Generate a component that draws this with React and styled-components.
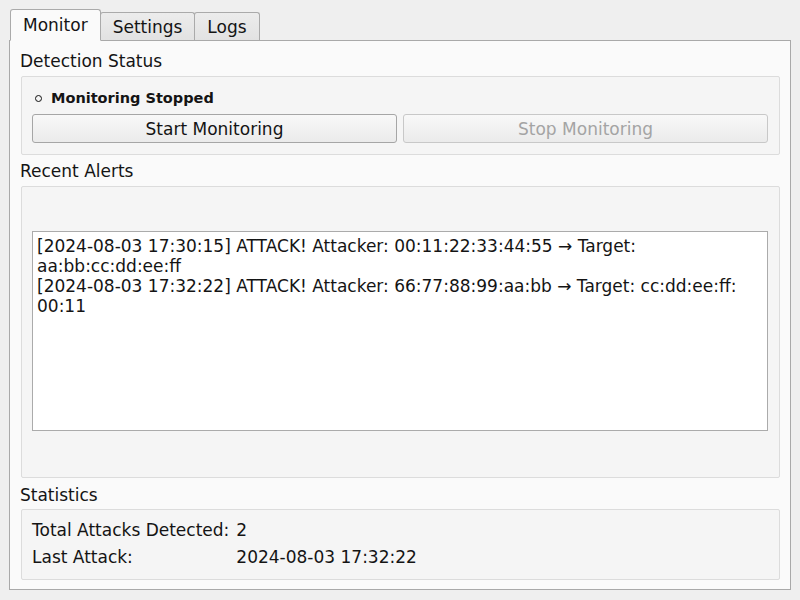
import React, { useState } from 'react';
import styled, { createGlobalStyle } from 'styled-components';

const GlobalStyle = createGlobalStyle`
	html, body {
		margin: 0;
		padding: 0;
		background: #efefef;
	}
	body {
		font-family: 'DejaVu Sans', 'Liberation Sans', sans-serif;
		font-size: 17px;
		line-height: 20px;
		color: #141414;
	}
`;

const Window = styled.div`
	width: 800px;
	height: 600px;
	box-sizing: border-box;
	padding: 9px 9px 10px 9px;
	display: flex;
	flex-direction: column;
`;

const TabBar = styled.div`
	display: flex;
	align-items: flex-end;
	padding-left: 1px;
	height: 32px;
	position: relative;
	z-index: 1;
	margin-bottom: -1px;
`;

const Tab = styled.div`
	box-sizing: border-box;
	padding: 0 12px;
	display: flex;
	align-items: center;
	border: 1px solid #aaaaaa;
	border-radius: 3px 3px 0 0;
	height: ${(p) => (p.active ? '32px' : '28px')};
	margin-bottom: ${(p) => (p.active ? '0' : '1px')};
	background: ${(p) => (p.active ? '#fafafa' : 'linear-gradient(#ececec, #e2e2e2)')};
	border-bottom: ${(p) => (p.active ? '1px solid #fafafa' : 'none')};
	margin-left: ${(p) => (p.active ? '0' : '-1px')};
	padding-top: ${(p) => (p.active ? '0' : '1px')};
	cursor: default;
	&:first-child {
		margin-left: 0;
	}
`;

const Pane = styled.div`
	flex: 1;
	box-sizing: border-box;
	border: 1px solid #a9a9a9;
	background: #fafafa;
	padding: 10px 10px 9px 11px;
	display: flex;
	flex-direction: column;
`;

const GroupTitle = styled.div`
	height: 20px;
	margin-left: -1px;
	margin-bottom: ${(p) => p.gap || 5}px;
`;

const Frame = styled.div`
	box-sizing: border-box;
	border: 1px solid #dcdcdc;
	border-radius: 2px;
	background: #f5f5f5;
	margin-bottom: ${(p) => p.below || 0}px;
`;

const StatusFrame = styled(Frame)`
	padding: 11px 11px 11px 10px;
	display: flex;
	flex-direction: column;
	gap: 6px;
`;

const StatusRow = styled.div`
	display: flex;
	align-items: center;
	height: 20px;
	padding-left: 3px;
	gap: 9px;
	font-weight: bold;
	font-size: 14.5px;
`;

const Ring = styled.span`
	display: inline-block;
	width: 7px;
	height: 7px;
	box-sizing: border-box;
	border: 1.5px solid #111;
	border-radius: 50%;
`;

const ButtonRow = styled.div`
	display: grid;
	grid-template-columns: 1fr 1fr;
	gap: 6px;
`;

const Button = styled.button`
	height: 29px;
	box-sizing: border-box;
	font: inherit;
	border: 1px solid ${(p) => (p.disabled ? '#c8c8c8' : '#a6a6a6')};
	border-radius: 3px;
	background: linear-gradient(#f8f8f8, #ebebeb);
	color: ${(p) => (p.disabled ? '#a4a4a4' : '#141414')};
	padding: 0;
`;

const AlertFrame = styled(Frame)`
	flex: 1;
	display: flex;
	align-items: center;
	padding: 0 11px 2px 10px;
`;

const AlertLog = styled.div`
	flex: 1;
	height: 200px;
	box-sizing: border-box;
	border: 1px solid #ababab;
	background: #ffffff;
	padding: 4px 6px 4px 4px;
	overflow: hidden;
`;

const AlertLine = styled.div`
	line-height: 20px;
`;

const StatsFrame = styled(Frame)`
	padding: 10px 11px 12px 10px;
	display: grid;
	grid-template-columns: max-content 1fr;
	column-gap: 7px;
	row-gap: 7px;
`;

const alerts = [
	['[2024-08-03 17:30:15] ATTACK! Attacker: 00:11:22:33:44:55 → Target: aa:bb:cc:dd:ee:ff'],
	['[2024-08-03 17:32:22] ATTACK! Attacker: 66:77:88:99:aa:bb → Target: cc:dd:ee:ff:', '00:11']
];

export default function App() {
	const [tab, setTab] = useState('Monitor');

	return (
		<Window>
			<GlobalStyle />
			<TabBar>
				{['Monitor', 'Settings', 'Logs'].map((name) => (
					<Tab key={name} active={tab === name} onClick={() => setTab(name)}>
						{name}
					</Tab>
				))}
			</TabBar>
			<Pane>
				<GroupTitle>Detection Status</GroupTitle>
				<StatusFrame below={6}>
					<StatusRow>
						<Ring />
						Monitoring Stopped
					</StatusRow>
					<ButtonRow>
						<Button>Start Monitoring</Button>
						<Button disabled>Stop Monitoring</Button>
					</ButtonRow>
				</StatusFrame>

				<GroupTitle>Recent Alerts</GroupTitle>
				<AlertFrame below={7}>
					<AlertLog>
						{alerts.map((parts, i) => (
							<AlertLine key={i}>
								{parts[0]}
								{parts[1] && (
									<>
										<wbr />
										{parts[1]}
									</>
								)}
							</AlertLine>
						))}
					</AlertLog>
				</AlertFrame>

				<GroupTitle gap={4}>Statistics</GroupTitle>
				<StatsFrame>
					<span>Total Attacks Detected:</span>
					<span>2</span>
					<span>Last Attack:</span>
					<span>2024-08-03 17:32:22</span>
				</StatsFrame>
			</Pane>
		</Window>
	);
}
